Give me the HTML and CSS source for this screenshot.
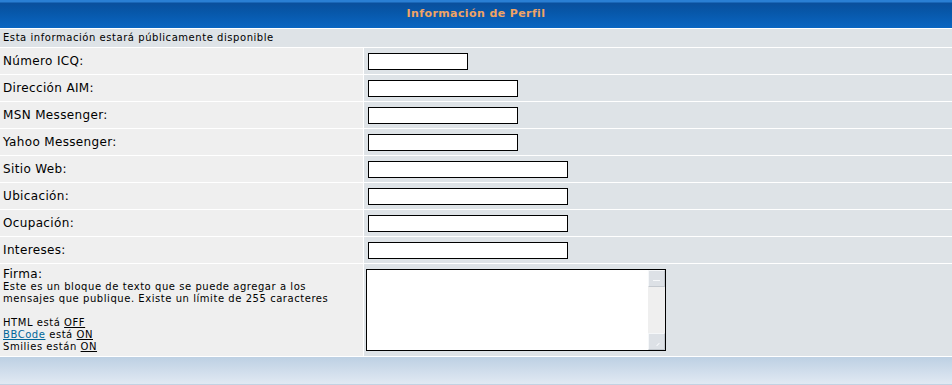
FILE: index.html
```html
<!DOCTYPE html>
<html lang="es">
<head>
    <meta charset="UTF-8">
    <title>Información de Perfil</title>
    <link rel="stylesheet" href="styles.css">
</head>
<body>
    <form class="forumline">
        <div class="thHead">Información de Perfil</div>
        <div class="row2 wide"><span class="gensmall">Esta información estará públicamente disponible</span></div>

        <label class="row1" for="icq">Número ICQ:</label>
        <div class="row2"><input type="text" id="icq" class="post w100"></div>

        <label class="row1" for="aim">Dirección AIM:</label>
        <div class="row2"><input type="text" id="aim" class="post w150"></div>

        <label class="row1" for="msn">MSN Messenger:</label>
        <div class="row2"><input type="text" id="msn" class="post w150"></div>

        <label class="row1" for="yim">Yahoo Messenger:</label>
        <div class="row2"><input type="text" id="yim" class="post w150"></div>

        <label class="row1" for="website">Sitio Web:</label>
        <div class="row2"><input type="text" id="website" class="post w200"></div>

        <label class="row1" for="location">Ubicación:</label>
        <div class="row2"><input type="text" id="location" class="post w200"></div>

        <label class="row1" for="occupation">Ocupación:</label>
        <div class="row2"><input type="text" id="occupation" class="post w200"></div>

        <label class="row1" for="interests">Intereses:</label>
        <div class="row2"><input type="text" id="interests" class="post w200"></div>

        <div class="row1 sig">
            <label for="signature">Firma:</label>
            <span class="gensmall explain">Este es un bloque de texto que se puede agregar a los mensajes que publique. Existe un límite de 255 caracteres</span>
            <span class="gensmall spaced">HTML está <u>OFF</u><br>
            <a href="#">BBCode</a> está <u>ON</u><br>
            Smilies están <u>ON</u></span>
        </div>
        <div class="row2 sigbox">
            <div class="textbox">
                <textarea id="signature"></textarea>
                <div class="scrollbar">
                    <span class="sbtn up"><i></i></span>
                    <span class="sbtn down"><i></i></span>
                </div>
            </div>
        </div>

        <div class="catBottom wide"></div>
    </form>
</body>
</html>
```

FILE: styles.css
```css
body {
    margin: 0;
    font-family: "DejaVu Sans", Verdana, sans-serif;
    color: #000;
    background: #fff;
}
.forumline {
    display: grid;
    grid-template-columns: 363px 1fr;
    grid-template-rows: 28px 18px repeat(8, 26px) 92px 1fr;
    gap: 1px;
    background: #fff;
    height: 385px;
}
.wide {
    grid-column: 1 / -1;
}
.thHead {
    grid-column: 1 / -1;
    background: linear-gradient(#2a7fd4 0, #2a7fd4 2px, #0a4f9c 3px, #0757a9 12px, #0a66c2 100%);
    color: #f0a465;
    font-weight: bold;
    font-size: 11px;
    text-align: center;
    line-height: 28px;
    letter-spacing: 0.4px;
}
.row1 {
    background: #efefef;
    font-size: 12px;
    letter-spacing: 0.35px;
    padding-left: 3px;
    display: flex;
    align-items: center;
}
.row2 {
    background: #dee3e7;
    display: flex;
    align-items: center;
    padding-left: 4px;
}
.row2.wide {
    padding-left: 3px;
}
.gensmall {
    font-size: 10px;
    line-height: 12px;
    letter-spacing: 0.55px;
}
.post {
    height: 17px;
    box-sizing: border-box;
    border: 1px solid #000;
    background: #fff;
    margin: 1px 0 0;
    padding: 0 2px;
    font-family: "DejaVu Sans", Verdana, sans-serif;
    font-size: 11px;
}
.w100 { width: 100px; }
.w150 { width: 150px; }
.w200 { width: 200px; }

.sig {
    flex-direction: column;
    align-items: flex-start;
    justify-content: flex-start;
    padding-top: 3px;
}
.sig label {
    line-height: 14px;
}
.sig .explain {
    max-width: 336px;
}
.sig .spaced {
    margin-top: 12px;
}
.sig a {
    color: #006699;
}
.sigbox {
    align-items: flex-start;
    padding-left: 2px;
    padding-top: 5px;
}
.textbox {
    display: flex;
    width: 300px;
    height: 82px;
    box-sizing: border-box;
    border: 1px solid #000;
    background: #fff;
}
.textbox textarea {
    flex: 1;
    border: none;
    padding: 0;
    margin: 0;
    resize: none;
    outline: none;
    background: #fff;
}
.scrollbar {
    width: 17px;
    background: #efefef;
    display: flex;
    flex-direction: column;
    justify-content: space-between;
}
.sbtn {
    height: 17px;
    box-sizing: border-box;
    background: #dde1e6;
    border: 1px solid #c4c9cf;
    border-top-color: #f5f7f9;
    border-left-color: #f5f7f9;
    position: relative;
}
.sbtn i {
    position: absolute;
    background: #f7f9fb;
}
.sbtn.up i {
    left: 4px;
    top: 9px;
    width: 7px;
    height: 1px;
}
.sbtn.down i {
    right: 4px;
    bottom: 4px;
    width: 4px;
    height: 1px;
    transform: rotate(-45deg);
}
.catBottom {
    background: linear-gradient(#bdd0e3, #e1e9f3);
    border-bottom: 1px solid #c3d1e2;
}
```
